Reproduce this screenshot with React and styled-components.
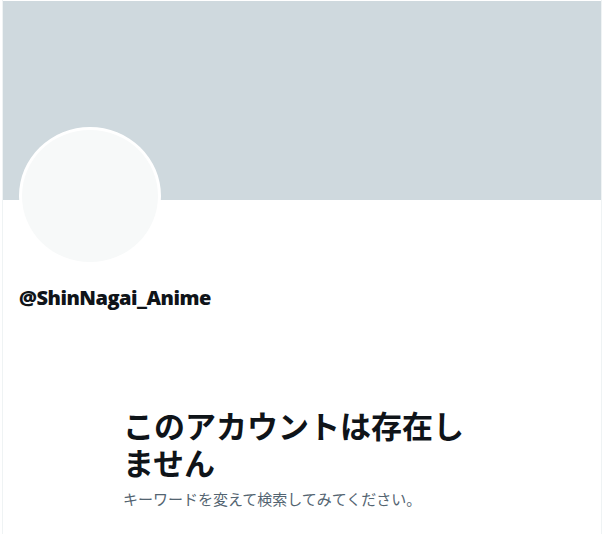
import React from 'react';
import styled, { createGlobalStyle } from 'styled-components';

const GlobalStyle = createGlobalStyle`
  html, body {
    margin: 0;
    padding: 0;
    background: #ffffff;
  }
  body {
    font-family: "Noto Sans", "Noto Sans CJK JP", sans-serif;
    color: #0f1419;
  }
`;

const Column = styled.main`
  box-sizing: border-box;
  width: 600px;
  min-height: 534px;
  margin-left: 2px;
  padding-top: 1px;
  border-left: 1px solid #eff3f4;
  border-right: 1px solid #eff3f4;
`;

const Banner = styled.div`
  height: 199px;
  background-color: #cfd9de;
`;

const ProfileHeader = styled.div`
  padding: 0 16px;
  display: flex;
  flex-direction: column;
  align-items: flex-start;
`;

const Avatar = styled.div`
  box-sizing: border-box;
  width: 142px;
  height: 138px;
  margin-top: -73px;
  border-radius: 50%;
  border: 3px solid #ffffff;
  background-color: #f7f9f9;
`;

const Handle = styled.div`
  margin-top: 21px;
  font-family: "Open Sans", "Noto Sans", sans-serif;
  font-weight: 800;
  font-size: 20px;
  line-height: 24px;
  letter-spacing: -0.5px;
  color: #0f1419;
`;

const EmptyState = styled.section`
  width: 358px;
  margin: 96px auto 0;
`;

const Title = styled.h1`
  margin: 0;
  font-family: "Noto Sans CJK JP", sans-serif;
  font-size: 31px;
  font-weight: 700;
  line-height: 37px;
  color: #0f1419;
`;

const Hint = styled.p`
  margin: 9px 0 0;
  font-family: "Noto Sans CJK JP", sans-serif;
  font-size: 15px;
  line-height: 20px;
  color: #536471;
`;

export default function App() {
  return (
    <>
      <GlobalStyle />
      <Column>
        <Banner />
        <ProfileHeader>
          <Avatar />
          <Handle>@ShinNagai_Anime</Handle>
        </ProfileHeader>
        <EmptyState>
          <Title>このアカウントは存在しません</Title>
          <Hint>キーワードを変えて検索してみてください。</Hint>
        </EmptyState>
      </Column>
    </>
  );
}
